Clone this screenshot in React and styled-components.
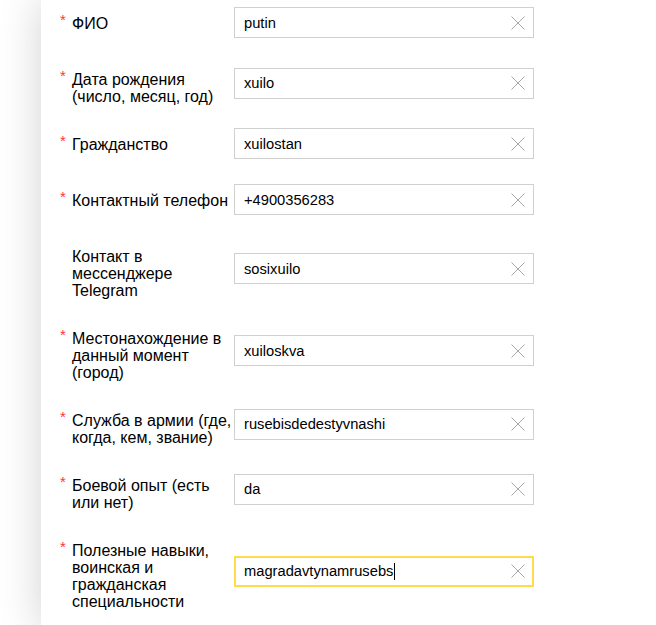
import React from 'react'
import styled, { createGlobalStyle } from 'styled-components'

const GlobalStyle = createGlobalStyle`
    html, body {
        margin: 0;
        background: #fff;
    }
    body {
        font-family: "Liberation Sans", Arial, sans-serif;
        overflow: hidden;
    }
`

const Page = styled.div`
    margin-left: 41px;
    min-height: 100vh;
    padding: 5px 0 0 19px;
    background: #fff;
    box-shadow: 0 0 40px rgba(0, 0, 0, 0.18);
`

const Form = styled.form`
    display: flex;
    flex-direction: column;
    gap: 21px;
`

const Row = styled.div`
    display: flex;
    align-items: center;
`

const Label = styled.label`
    align-self: flex-start;
    display: flex;
    padding-top: 10px;
    color: #000;
    font-size: 16px;
    line-height: 17px;
`

const Star = styled.span`
    width: 12px;
    flex-shrink: 0;
    margin-top: -3px;
    color: #f33;
    font-size: 15px;
    line-height: 15px;
    visibility: ${p => (p.$hidden ? 'hidden' : 'visible')};
`

const LabelText = styled.span`
    width: 162px;
`

const Field = styled.div`
    box-sizing: border-box;
    width: 300px;
    height: 31px;
    margin: 2px 0;
    display: flex;
    align-items: center;
    padding: 0 8px 0 9px;
    background: #fff;
    border: 1px solid ${p => (p.$focused ? '#ffdb4d' : '#d0d0d0')};
    box-shadow: ${p => (p.$focused ? 'inset 0 0 0 1px #ffdb4d' : 'none')};
`

const Value = styled.span`
    flex: 1;
    display: flex;
    align-items: center;
    color: #000;
    font-size: 14.7px;
    white-space: nowrap;
`

const Caret = styled.span`
    display: inline-block;
    width: 1px;
    height: 17px;
    margin-left: 1px;
    background: #000;
`

const Clear = styled.button`
    width: 14px;
    height: 14px;
    padding: 0;
    border: 0;
    background: none;
    display: flex;
    cursor: pointer;
`

const ClearIcon = () => (
    <svg width="14" height="14" viewBox="0 0 14 14">
        <path d="M0.5 0.5 L13.5 13.5 M13.5 0.5 L0.5 13.5" stroke="#a8a8a8" strokeWidth="1" fill="none" />
    </svg>
)

const fields = [
    { label: 'ФИО', value: 'putin' },
    { label: 'Дата рождения (число, месяц, год)', value: 'xuilo' },
    { label: 'Гражданство', value: 'xuilostan' },
    { label: 'Контактный телефон', value: '+4900356283' },
    { label: 'Контакт в мессенджере Telegram', value: 'sosixuilo', optional: true },
    { label: 'Местонахождение в данный момент (город)', value: 'xuiloskva' },
    { label: 'Служба в армии (где, когда, кем, звание)', value: 'rusebisdedestyvnashi' },
    { label: 'Боевой опыт (есть или нет)', value: 'da' },
    { label: 'Полезные навыки, воинская и гражданская специальности', value: 'magradavtynamrusebs', focused: true },
]

const App = () => {
    return (
        <>
            <GlobalStyle />
            <Page>
                <Form>
                    {fields.map(f => (
                        <Row key={f.label}>
                            <Label>
                                <Star $hidden={f.optional}>*</Star>
                                <LabelText>{f.label}</LabelText>
                            </Label>
                            <Field $focused={f.focused}>
                                <Value>
                                    {f.value}
                                    {f.focused && <Caret />}
                                </Value>
                                <Clear type="button" aria-label="Очистить">
                                    <ClearIcon />
                                </Clear>
                            </Field>
                        </Row>
                    ))}
                </Form>
            </Page>
        </>
    )
}

export default App
